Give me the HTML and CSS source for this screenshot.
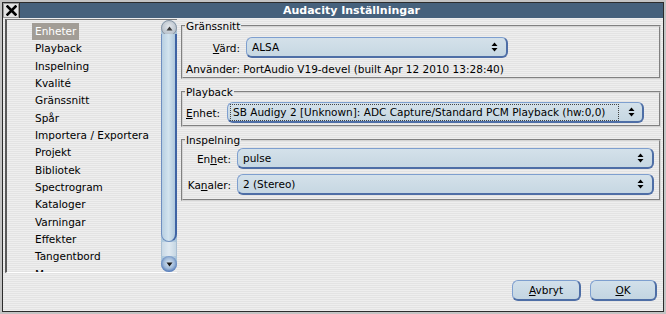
FILE: index.html
```html
<!DOCTYPE html>
<html lang="sv">
<head>
<meta charset="utf-8">
<title>Audacity Inställningar</title>
<link rel="stylesheet" href="styles.css">
</head>
<body>
<div class="window">
  <div class="frame">
    <div class="titlebar">
      <div class="close">
        <svg width="11" height="11" viewBox="0 0 11 11"><path d="M1.5 1.5 L9.5 9.5 M9.5 1.5 L1.5 9.5" stroke="#000" stroke-width="2.6" stroke-linecap="square"/></svg>
      </div>
      <div class="title">Audacity Inställningar</div>
    </div>
    <div class="content">
      <div class="main">
        <div class="listbox">
          <ul class="list">
            <li class="item selected"><span>Enheter</span></li>
            <li class="item"><span>Playback</span></li>
            <li class="item"><span>Inspelning</span></li>
            <li class="item"><span>Kvalité</span></li>
            <li class="item"><span>Gränssnitt</span></li>
            <li class="item"><span>Spår</span></li>
            <li class="item"><span>Importera / Exportera</span></li>
            <li class="item"><span>Projekt</span></li>
            <li class="item"><span>Bibliotek</span></li>
            <li class="item"><span>Spectrogram</span></li>
            <li class="item"><span>Kataloger</span></li>
            <li class="item"><span>Varningar</span></li>
            <li class="item"><span>Effekter</span></li>
            <li class="item"><span>Tangentbord</span></li>
            <li class="item"><span>Mus</span></li>
          </ul>
          <div class="scrollbar">
            <div class="sb-up">
              <svg width="7" height="5" viewBox="0 0 7 5"><path d="M0.5 4.5 L3.5 0.5 L6.5 4.5 Z" fill="#3a3a3a"/></svg>
            </div>
            <div class="sb-thumb"></div>
            <div class="sb-rest"></div>
            <div class="sb-down">
              <svg width="7" height="5" viewBox="0 0 7 5"><path d="M0.5 0.5 L3.5 4.5 L6.5 0.5 Z" fill="#1a1a1a"/></svg>
            </div>
          </div>
        </div>
        <div class="panel">
          <fieldset class="group g1">
            <legend>Gränssnitt</legend>
            <div class="row">
              <label class="lbl w1"><u>V</u>ärd:</label>
              <div class="combo c1"><span class="val">ALSA</span>
                <svg class="arr" width="7" height="10" viewBox="0 0 7 10"><path d="M0.5 4 L3.5 0.5 L6.5 4 Z M0.5 6 L3.5 9.5 L6.5 6 Z" fill="#000"/></svg>
              </div>
            </div>
            <div class="info">Använder: PortAudio V19-devel (built Apr 12 2010 13:28:40)</div>
          </fieldset>
          <fieldset class="group g2">
            <legend>Playback</legend>
            <div class="row">
              <label class="lbl"><u>E</u>nhet:</label>
              <div class="combo c2"><span class="val focus">SB Audigy 2 [Unknown]: ADC Capture/Standard PCM Playback (hw:0,0)</span>
                <svg class="arr" width="7" height="10" viewBox="0 0 7 10"><path d="M0.5 4 L3.5 0.5 L6.5 4 Z M0.5 6 L3.5 9.5 L6.5 6 Z" fill="#000"/></svg>
              </div>
            </div>
          </fieldset>
          <fieldset class="group g3">
            <legend>Inspelning</legend>
            <div class="row">
              <label class="lbl w3">En<u>h</u>et:</label>
              <div class="combo c3"><span class="val">pulse</span>
                <svg class="arr" width="7" height="10" viewBox="0 0 7 10"><path d="M0.5 4 L3.5 0.5 L6.5 4 Z M0.5 6 L3.5 9.5 L6.5 6 Z" fill="#000"/></svg>
              </div>
            </div>
            <div class="row r2">
              <label class="lbl w3">Ka<u>n</u>aler:</label>
              <div class="combo c3"><span class="val">2 (Stereo)</span>
                <svg class="arr" width="7" height="10" viewBox="0 0 7 10"><path d="M0.5 4 L3.5 0.5 L6.5 4 Z M0.5 6 L3.5 9.5 L6.5 6 Z" fill="#000"/></svg>
              </div>
            </div>
          </fieldset>
        </div>
      </div>
      <div class="buttons">
        <button class="btn b-cancel"><u>A</u>vbryt</button>
        <button class="btn b-ok"><u>O</u>K</button>
      </div>
    </div>
  </div>
</div>
</body>
</html>
```

FILE: styles.css
```css
* { box-sizing: border-box; }
html, body { margin: 0; padding: 0; }
body {
  width: 666px;
  height: 314px;
  overflow: hidden;
  font-family: "DejaVu Sans", "Liberation Sans", sans-serif;
  font-size: 10.5px;
  color: #000;
  background: #bcbcbc;
}
.window {
  width: 666px;
  height: 314px;
  padding: 2px 2px 2px 2px;
  background: #c4c4c4;
}
.frame {
  height: 100%;
  border: 1px solid #2c2c2c;
  display: flex;
  flex-direction: column;
}
.titlebar {
  height: 15px;
  display: flex;
  background: #2c2c2c;
}
.close {
  width: 16px;
  height: 15px;
  background: #e2e2e2;
  border: 1px solid #9a9a9a;
  display: flex;
  align-items: center;
  justify-content: center;
}
.title {
  flex: 1;
  margin-left: 1px;
  background: #46617c;
  color: #fff;
  font-weight: bold;
  font-size: 11px;
  line-height: 15px;
  text-align: center;
  padding-left: 20px;
}
.content {
  flex: 1;
  display: flex;
  flex-direction: column;
  padding: 1px 2px 0 2px;
  background: repeating-linear-gradient(to bottom, #eeeeee 0, #eeeeee 1px, #e3e3e3 1px, #e3e3e3 2px);
}
.main {
  height: 254px;
  display: flex;
  gap: 4px;
}
.listbox {
  width: 172px;
  display: flex;
  border-top: 1px solid #7a7a7a;
  border-left: 2px solid #5a5a5a;
  border-bottom: 1px solid #ffffff;
}
.list {
  flex: 1;
  margin: 0;
  list-style: none;
  padding: 3px 0 0 25px;
  overflow: hidden;
}
.item {
  height: 17.33px;
  line-height: 17px;
  white-space: nowrap;
}
.item span { padding: 0 3px; display: inline-block; }
.item.selected span { background: #a29d96; color: #fff; }
.scrollbar {
  width: 16px;
  display: flex;
  flex-direction: column;
  background: linear-gradient(to right, #a9c5da, #c6dbe9 50%, #a5c0d6);
  border-radius: 8px;
}
.sb-up {
  height: 16px;
  border-radius: 8px;
  background: radial-gradient(circle at 50% 40%, #e4e8ec 0, #b8c2cc 70%, #8e9aa8 100%);
  border: 1px solid #8a96a4;
  display: flex;
  align-items: center;
  justify-content: center;
}
.sb-thumb {
  flex: 1;
  margin-top: -2px;
  border: 1px solid #6f8fbf;
  border-right: 2px solid #3f64a4;
  border-radius: 0 0 8px 8px;
  border-top: none;
  background: linear-gradient(to right, #b7cfe2, #d2e3ee 50%, #b0c9dd);
}
.sb-rest {
  height: 14px;
  background: linear-gradient(to right, #c9d9e6, #dfe9f1 50%, #c5d6e3);
  border-left: 1px solid #aabfd3;
  border-right: 1px solid #aabfd3;
}
.sb-down {
  height: 16px;
  border-radius: 8px;
  background: radial-gradient(circle at 50% 45%, #dbe6f2 0, #9fb9d8 45%, #3f68b0 80%, #2a4f94 100%);
  display: flex;
  align-items: center;
  justify-content: center;
}
.panel {
  width: 480px;
  display: flex;
  flex-direction: column;
  gap: 7px;
  padding-top: 1px;
}
.group {
  margin: 0;
  min-width: 0;
  border: 2px groove #d4d4d4;
  padding: 0 5px 0 3px;
}
.group legend {
  padding: 0 1px;
  margin-left: -1px;
  line-height: 12px;
  height: 12px;
}
.row {
  display: flex;
  align-items: center;
  gap: 6px;
}
.lbl { white-space: nowrap; }
.w1 { width: 54px; text-align: right; }
.w3 { width: 45px; text-align: right; }
.combo {
  height: 21px;
  display: flex;
  align-items: center;
  border: 1px solid #7e9fcf;
  border-right: 2px solid #4e6ea6;
  border-bottom: 2px solid #4e6ea6;
  border-radius: 6px;
  background: linear-gradient(to bottom, #d4e1ea, #c6d7e2);
  padding: 0 8px 0 5px;
}
.combo .val { flex: 1; white-space: nowrap; overflow: hidden; }
.combo .arr { flex: none; }
.g1 { height: 59px; }
.g1 .row { margin-top: 5px; }
.c1 { width: 262px; }
.info { margin-top: 5px; line-height: 12px; }
.g2 { height: 41px; }
.g2 .row { margin-top: 4px; gap: 7px; }
.c2 { width: 417px; padding-left: 2px; padding-right: 7px; }
.c2 .val.focus {
  border: 1px dotted #444;
  line-height: 15px;
  padding-left: 2px;
  margin-right: 9px;
}
.g3 { height: 67px; }
.g3 .row { margin-top: 2px; }
.g3 .r2 { margin-top: 5px; }
.c3 { width: 417px; }
.buttons {
  display: flex;
  justify-content: flex-end;
  gap: 9px;
  padding: 7px 4px 0 0;
}
.btn {
  height: 21px;
  font-family: "DejaVu Sans", "Liberation Sans", sans-serif;
  font-size: 10.5px;
  color: #000;
  border: 1px solid #7e9fcf;
  border-right: 2px solid #4e6ea6;
  border-bottom: 2px solid #4e6ea6;
  border-radius: 6px;
  background: linear-gradient(to bottom, #d2e0ea, #c3d5e1);
  padding: 0;
}
.b-cancel { width: 69px; }
.b-ok { width: 67px; }
```
